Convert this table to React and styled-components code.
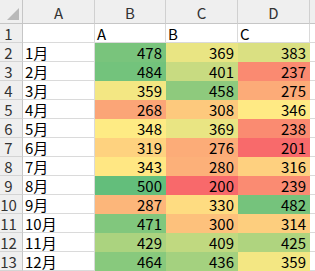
import React from "react";
import styled, { createGlobalStyle } from "styled-components";

const GlobalStyle = createGlobalStyle`
  html, body {
    margin: 0;
    padding: 0;
    background: #ffffff;
    overflow: hidden;
  }
`;

const Sheet = styled.div`
  display: grid;
  grid-template-columns: 23px 72px 71px 72px 72px 1fr;
  grid-template-rows: 24px repeat(13, 19px);
  width: 315px;
  height: 271px;
  overflow: hidden;
  font-family: "Noto Sans CJK SC", "Noto Sans", sans-serif;
  font-size: 15px;
  color: #000;
`;

const Corner = styled.div`
  background: #efefef;
  border-right: 1px solid #c6c6c6;
  border-bottom: 1px solid #c6c6c6;
  box-sizing: border-box;
  display: flex;
  align-items: flex-end;
  justify-content: flex-end;
  padding: 0 3px 3px 0;
`;

const ColHead = styled.div`
  background: #efefef;
  border-right: 1px solid #d0d0d0;
  border-bottom: 1px solid #c6c6c6;
  box-sizing: border-box;
  display: flex;
  align-items: center;
  justify-content: center;
  color: #333;
  line-height: 1;
  padding-top: 1px;
`;

const RowHead = styled.div`
  background: #efefef;
  border-right: 1px solid #c6c6c6;
  border-bottom: 1px solid #d4d4d4;
  box-sizing: border-box;
  display: flex;
  align-items: center;
  justify-content: center;
  padding-right: 5px;
  color: #333;
  line-height: 1;
`;

const Cell = styled.div`
  background: ${({ $bg }) => $bg || "#ffffff"};
  border-right: 1px solid ${({ $bg }) => $bg || "#dadada"};
  border-bottom: 1px solid ${({ $bg }) => $bg || "#dadada"};
  box-sizing: border-box;
  display: flex;
  align-items: center;
  justify-content: ${({ $num }) => ($num ? "flex-end" : "flex-start")};
  padding: 0 3px 0 2px;
  line-height: 1;
  white-space: nowrap;
`;

const cols = ["A", "B", "C", "D", ""];
const months = ["1月", "2月", "3月", "4月", "5月", "6月", "7月", "8月", "9月", "10月", "11月", "12月"];
const data = [
  [478, 369, 383],
  [484, 401, 237],
  [359, 458, 275],
  [268, 308, 346],
  [348, 369, 238],
  [319, 276, 201],
  [343, 280, 316],
  [500, 200, 239],
  [287, 330, 482],
  [471, 300, 314],
  [429, 409, 425],
  [464, 436, 359],
];

const RED = [248, 105, 107];
const YELLOW = [255, 235, 132];
const GREEN = [99, 190, 123];

const all = data.flat().sort((a, b) => a - b);
const min = all[0];
const max = all[all.length - 1];
const mid = (all[17] + all[18]) / 2;

const mix = (a, b, t) =>
  `rgb(${a.map((v, i) => Math.round(v + (b[i] - v) * t)).join(",")})`;

const scale = (v) =>
  v <= mid ? mix(RED, YELLOW, (v - min) / (mid - min)) : mix(YELLOW, GREEN, (v - mid) / (max - mid));

const App = () => (
  <>
    <GlobalStyle />
    <Sheet>
      <Corner>
        <svg width="12" height="12" viewBox="0 0 12 12">
          <polygon points="12,0 12,12 0,12" fill="#b9b9b9" />
        </svg>
      </Corner>
      {cols.map((c, i) => (
        <ColHead key={i}>{c}</ColHead>
      ))}

      <RowHead>1</RowHead>
      <Cell />
      <Cell>A</Cell>
      <Cell>B</Cell>
      <Cell>C</Cell>
      <Cell />

      {data.map((row, r) => (
        <React.Fragment key={r}>
          <RowHead>{r + 2}</RowHead>
          <Cell>{months[r]}</Cell>
          {row.map((v, c) => (
            <Cell key={c} $num $bg={scale(v)}>
              {v}
            </Cell>
          ))}
          <Cell />
        </React.Fragment>
      ))}
    </Sheet>
  </>
);

export default App;
